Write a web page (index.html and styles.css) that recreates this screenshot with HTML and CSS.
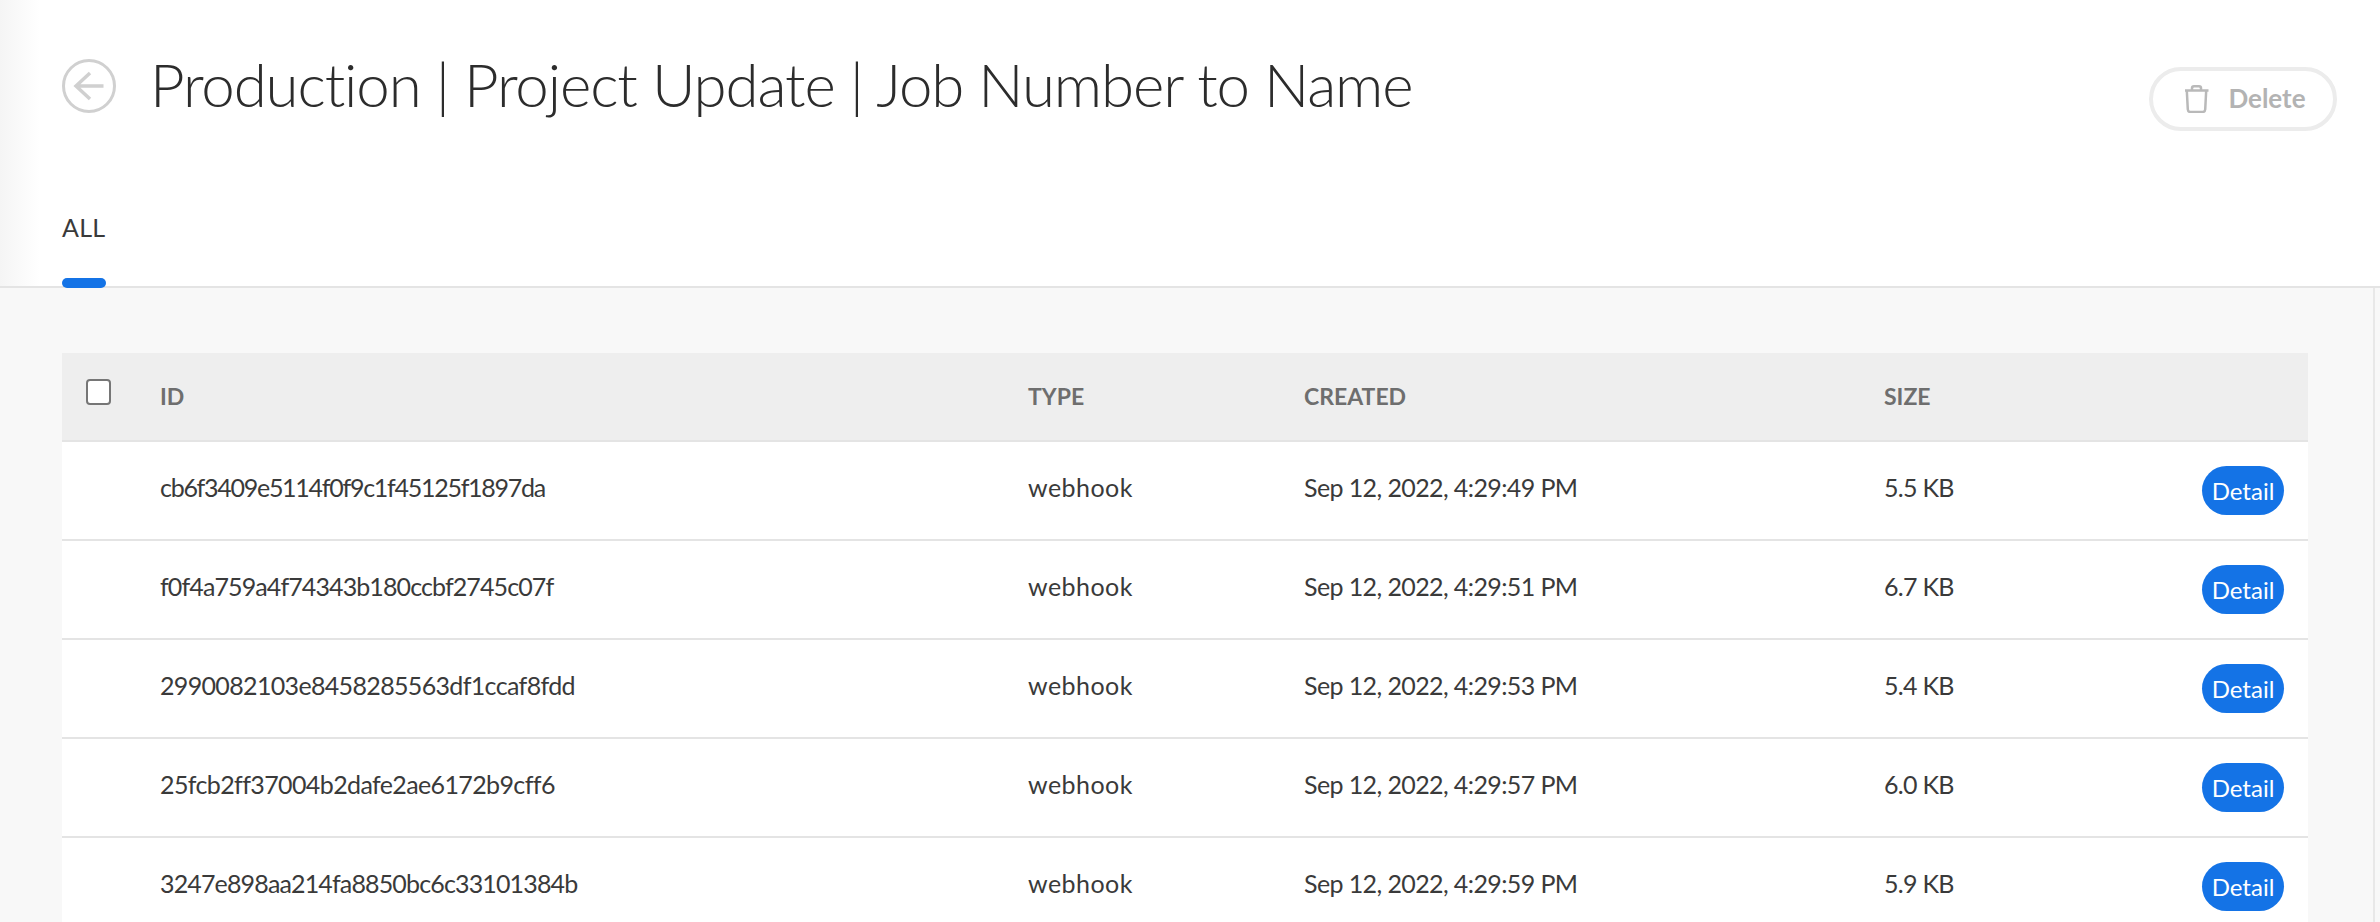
FILE: index.html
```html
<!DOCTYPE html>
<html lang="en">
<head>
<meta charset="UTF-8">
<title>Production | Project Update | Job Number to Name</title>
<link rel="stylesheet" href="styles.css">
</head>
<body>
<header class="top">
    <div class="title-row">
        <div class="title-left">
            <svg class="back" viewBox="0 0 54 54" fill="none">
                <circle cx="27" cy="27" r="25.5" stroke="#d0d0d0" stroke-width="3"/>
                <path d="M41.5 27H14M28 14L14 27L28 40" stroke="#d0d0d0" stroke-width="3.5"/>
            </svg>
            <h1>Production | Project Update | Job Number to Name</h1>
        </div>
        <button class="delete">
            <svg class="trash" viewBox="0 0 25 28" fill="none">
                <path d="M1 5.5H24.500M2.800 5.500L3.800 24.500Q4 27 6.500 27H18.500Q21 27 21.200 24.500L22.200 5.500M8 5.500V3Q8 1.300 10 1.300H15Q17 1.300 17 3V5.500" stroke="#b9b9b9" stroke-width="2.500"/>
            </svg>
            Delete
        </button>
    </div>
    <nav class="tabs">
        <a class="tab">ALL</a>
    </nav>
</header>
<main class="content">
    <table class="list">
        <thead>
            <tr>
                <th class="col-check"><span class="checkbox"></span></th>
                <th class="col-id"><span class="head-label">ID</span></th>
                <th class="col-type"><span class="head-label">TYPE</span></th>
                <th class="col-created"><span class="head-label">CREATED</span></th>
                <th class="col-size"><span class="head-label">SIZE</span></th>
                <th></th>
            </tr>
        </thead>
        <tbody>
            <tr>
                <td></td>
                <td class="cell-id">cb6f3409e5114f0f9c1f45125f1897da</td>
                <td class="cell-type">webhook</td>
                <td class="cell-created">Sep 12, 2022, 4:29:49 PM</td>
                <td class="cell-size">5.5 KB</td>
                <td class="col-action"><button class="detail">Detail</button></td>
            </tr>
            <tr>
                <td></td>
                <td class="cell-id">f0f4a759a4f74343b180ccbf2745c07f</td>
                <td class="cell-type">webhook</td>
                <td class="cell-created">Sep 12, 2022, 4:29:51 PM</td>
                <td class="cell-size">6.7 KB</td>
                <td class="col-action"><button class="detail">Detail</button></td>
            </tr>
            <tr>
                <td></td>
                <td class="cell-id">2990082103e8458285563df1ccaf8fdd</td>
                <td class="cell-type">webhook</td>
                <td class="cell-created">Sep 12, 2022, 4:29:53 PM</td>
                <td class="cell-size">5.4 KB</td>
                <td class="col-action"><button class="detail">Detail</button></td>
            </tr>
            <tr>
                <td></td>
                <td class="cell-id">25fcb2ff37004b2dafe2ae6172b9cff6</td>
                <td class="cell-type">webhook</td>
                <td class="cell-created">Sep 12, 2022, 4:29:57 PM</td>
                <td class="cell-size">6.0 KB</td>
                <td class="col-action"><button class="detail">Detail</button></td>
            </tr>
            <tr>
                <td></td>
                <td class="cell-id">3247e898aa214fa8850bc6c33101384b</td>
                <td class="cell-type">webhook</td>
                <td class="cell-created">Sep 12, 2022, 4:29:59 PM</td>
                <td class="cell-size">5.9 KB</td>
                <td class="col-action"><button class="detail">Detail</button></td>
            </tr>
        </tbody>
    </table>
</main>
</body>
</html>
```
FILE: styles.css
```css
html, body {
    margin: 0;
    height: 922px;
    overflow: hidden;
}
body {
    font-family: "Lato", "Open Sans", sans-serif;
    background-color: #f8f8f8;
    color: #2c2c2c;
}
.top {
    height: 286px;
    box-sizing: content-box;
    border-bottom: 2px solid #e4e4e4;
    background: linear-gradient(to right, #f5f5f5 0, #ffffff 40px);
    display: flex;
    flex-direction: column;
    padding: 0 43px 0 62px;
}
.title-row {
    display: flex;
    justify-content: space-between;
    align-items: flex-start;
    padding-top: 47px;
    height: 150px;
}
.title-left {
    display: flex;
    align-items: flex-start;
    gap: 34px;
}
.back {
    width: 54px;
    height: 54px;
    margin-top: 12px;
}
h1 {
    margin: 0;
    font-size: 60px;
    line-height: 74px;
    font-weight: 300;
    letter-spacing: -1.12px;
}
.delete {
    margin-top: 20px;
    width: 188px;
    height: 64px;
    box-sizing: border-box;
    border: 4px solid #ececec;
    border-radius: 32px;
    background: #ffffff;
    color: #b3b3b3;
    font-family: inherit;
    font-size: 26px;
    font-weight: 700;
    line-height: 30px;
    padding: 0 0 3px 4px;
    display: flex;
    align-items: center;
    justify-content: center;
    gap: 19px;
}
.trash {
    width: 25px;
    height: 28px;
    margin-top: 3px;
}
.tabs {
    margin-top: auto;
    display: flex;
}
.tab {
    position: relative;
    font-size: 25px;
    font-weight: 400;
    letter-spacing: 0.3px;
    line-height: 30px;
    padding-bottom: 44px;
    color: #3a3a3a;
}
.tab::after {
    content: "";
    position: absolute;
    left: 0;
    right: 0;
    bottom: -2px;
    height: 10px;
    border-radius: 5px;
    background-color: #1473e6;
}
.content {
    height: 634px;
    margin-right: 5px;
    border-right: 2px solid #e8e8e8;
    padding: 65px 65px 0 62px;
    box-sizing: border-box;
}
.list {
    width: 2246px;
    table-layout: fixed;
    border-collapse: collapse;
    background-color: #ffffff;
    font-size: 25px;
    color: #3a3a3a;
}
.list th {
    height: 87px;
    padding: 0;
    background-color: #eeeeee;
    color: #6e6e6e;
    font-size: 23px;
    font-weight: 700;
    text-align: left;
    border-bottom: 2px solid #e4e4e4;
}
.head-label {
    display: block;
    padding-bottom: 2px;
}
.list td {
    padding: 0 0 8px;
    box-sizing: content-box;
    height: 89px;
    border-bottom: 2px solid #e4e4e4;
    font-weight: 400;
}
.col-check {
    width: 98px;
}
.col-id {
    width: 868px;
}
.col-type {
    width: 276px;
}
.col-created {
    width: 580px;
}
.cell-id {
    letter-spacing: -1.28px;
}
/* hashes run wider or narrower depending on how many 1s and fs they have */
tr:nth-child(2) .cell-id {
    letter-spacing: -0.9px;
}
tr:nth-child(3) .cell-id {
    letter-spacing: -0.66px;
}
tr:nth-child(4) .cell-id {
    letter-spacing: -0.62px;
}
tr:nth-child(5) .cell-id {
    letter-spacing: -0.85px;
}
.cell-type {
    letter-spacing: 0.45px;
}
.cell-created {
    letter-spacing: -0.6px;
}
.cell-size {
    letter-spacing: -0.7px;
}
.checkbox {
    display: block;
    width: 25px;
    height: 26px;
    margin: 0 0 9px 24px;
    box-sizing: border-box;
    border: 2px solid #767676;
    border-radius: 4px;
    background: #ffffff;
}
.list .col-action {
    text-align: right;
    padding: 0 24px 0 0;
    height: 97px;
}
.detail {
    display: inline-block;
    vertical-align: middle;
    width: 82px;
    height: 49px;
    border: none;
    border-radius: 25px;
    background-color: #1473e6;
    color: #ffffff;
    font-family: inherit;
    font-size: 24px;
    padding: 0;
}
```
